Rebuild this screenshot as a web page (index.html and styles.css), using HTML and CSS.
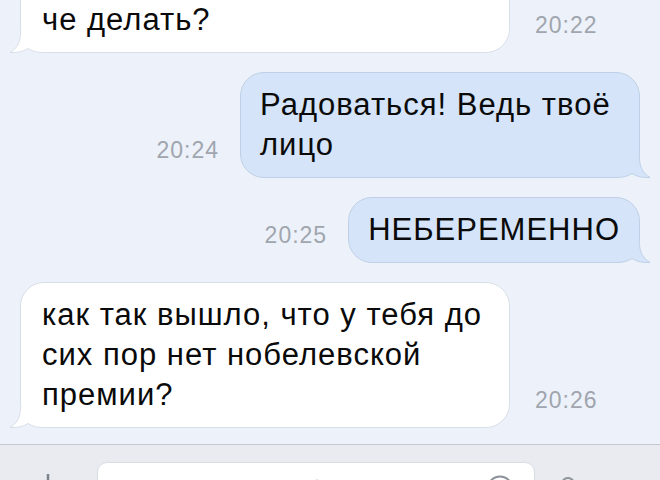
FILE: index.html
```html
<!DOCTYPE html>
<html lang="ru">
<head>
  <meta charset="UTF-8">
  <meta name="viewport" content="width=device-width, initial-scale=1.0">
  <title>Диалог</title>
  <link rel="stylesheet" href="styles.css">
</head>
<body>
  <div class="screen">
    <div class="chat">
      <div class="row in">
        <div class="bubble first">
          че делать?
          <svg class="tail" viewBox="0 0 36 20"><path class="tail-fill" d="M11.5 0C11.5 9 8 15.5 1 19.5C8 20 14.5 18.5 19 15.5C24 18.8 29 19.5 36 19.5L36 0Z"/><path class="tail-line" d="M11.5 0C11.5 9 8 15.5 1 19.5C8 20 14.5 18.5 19 15.5C24 18.8 29 19.5 36 19.5"/></svg>
        </div>
        <span class="time">20:22</span>
      </div>

      <div class="row out">
        <span class="time">20:24</span>
        <div class="bubble">
          Радоваться! Ведь твоё лицо
          <svg class="tail" viewBox="0 0 36 20"><path class="tail-fill" d="M11.5 0C11.5 9 8 15.5 1 19.5C8 20 14.5 18.5 19 15.5C24 18.8 29 19.5 36 19.5L36 0Z"/><path class="tail-line" d="M11.5 0C11.5 9 8 15.5 1 19.5C8 20 14.5 18.5 19 15.5C24 18.8 29 19.5 36 19.5"/></svg>
        </div>
      </div>

      <div class="row out">
        <span class="time">20:25</span>
        <div class="bubble">
          НЕБЕРЕМЕННО
          <svg class="tail" viewBox="0 0 36 20"><path class="tail-fill" d="M11.5 0C11.5 9 8 15.5 1 19.5C8 20 14.5 18.5 19 15.5C24 18.8 29 19.5 36 19.5L36 0Z"/><path class="tail-line" d="M11.5 0C11.5 9 8 15.5 1 19.5C8 20 14.5 18.5 19 15.5C24 18.8 29 19.5 36 19.5"/></svg>
        </div>
      </div>

      <div class="row in">
        <div class="bubble">
          как так вышло, что у тебя до сих пор нет нобелевской премии?
          <svg class="tail" viewBox="0 0 36 20"><path class="tail-fill" d="M11.5 0C11.5 9 8 15.5 1 19.5C8 20 14.5 18.5 19 15.5C24 18.8 29 19.5 36 19.5L36 0Z"/><path class="tail-line" d="M11.5 0C11.5 9 8 15.5 1 19.5C8 20 14.5 18.5 19 15.5C24 18.8 29 19.5 36 19.5"/></svg>
        </div>
        <span class="time">20:26</span>
      </div>
    </div>

    <div class="toolbar">
      <svg class="attach" viewBox="0 0 20 20"><path d="M10 1V19M1 10H19"/></svg>
      <div class="input">
        <span class="placeholder">Напишите сообщение...</span>
        <svg class="smile" viewBox="0 0 28 28"><circle cx="14" cy="14" r="12.5"/></svg>
      </div>
      <svg class="mic" viewBox="0 0 16 24"><rect x="2" y="1" width="12" height="18" rx="6"/></svg>
    </div>
  </div>
</body>
</html>
```

FILE: styles.css
```css
* {
  margin: 0;
  padding: 0;
  box-sizing: border-box;
}

body {
  font-family: 'Liberation Sans', Arial, sans-serif;
  background: #edf2fa;
  color: #0a0a0a;
}

.screen {
  height: 480px;
  display: flex;
  flex-direction: column;
  overflow: hidden;
}

.chat {
  flex: 1;
  min-height: 0;
  display: flex;
  flex-direction: column;
  justify-content: flex-end;
  gap: 19px;
  padding: 0 20px 16px;
  overflow: hidden;
}

.row {
  display: flex;
  align-items: flex-end;
}

.row.in {
  gap: 25px;
}

.row.out {
  justify-content: flex-end;
  gap: 21px;
}

.bubble {
  position: relative;
  padding: 12px 21px;
  font-size: 31px;
  letter-spacing: 1px;
  line-height: 40px;
  border-radius: 24px;
  border: 1px solid;
}

.row.in .bubble {
  width: 490px;
  background: #fff;
  border-color: #d9dfe9;
}

.row.out .bubble {
  max-width: 400px;
  padding: 12px 19px;
  background: #d5e4f8;
  border-color: #bfd0e7;
}

.bubble.first {
  padding-top: 60px;
}

.tail {
  position: absolute;
  bottom: -1px;
  width: 36px;
  height: 20px;
}

.row.in .tail {
  left: -12px;
}

.row.out .tail {
  right: -12px;
  transform: scaleX(-1);
}

.tail-line {
  fill: none;
  stroke-width: 1;
}

.row.in .tail-fill { fill: #fff; }
.row.in .tail-line { stroke: #d9dfe9; }
.row.out .tail-fill { fill: #d5e4f8; }
.row.out .tail-line { stroke: #bfd0e7; }

.time {
  font-size: 23px;
  letter-spacing: 1px;
  line-height: 24px;
  color: #a0a5ae;
  margin-bottom: 16px;
  white-space: nowrap;
}

.toolbar {
  height: 36px;
  flex-shrink: 0;
  display: flex;
  align-items: flex-start;
  padding: 17px 0 0 38px;
  background: #e9ebf0;
  border-top: 1px solid #c4c8d0;
}

.attach {
  width: 20px;
  height: 20px;
  margin-top: 11px;
  fill: none;
  stroke: #7d828b;
  stroke-width: 2.5;
}

.input {
  width: 438px;
  height: 44px;
  margin-left: 39px;
  display: flex;
  justify-content: space-between;
  align-items: flex-start;
  padding: 14px 20px 0 20px;
  background: #fff;
  border: 1px solid #d9dce3;
  border-radius: 10px;
}

.placeholder {
  font-size: 28px;
  line-height: 28px;
  color: #c3c7cd;
}

.smile {
  width: 28px;
  height: 28px;
  margin-top: -2px;
  fill: none;
  stroke: #8e939b;
  stroke-width: 2;
}

.mic {
  width: 16px;
  height: 24px;
  margin: 15px 0 0 25px;
  fill: none;
  stroke: #8e939b;
  stroke-width: 2;
}
```
